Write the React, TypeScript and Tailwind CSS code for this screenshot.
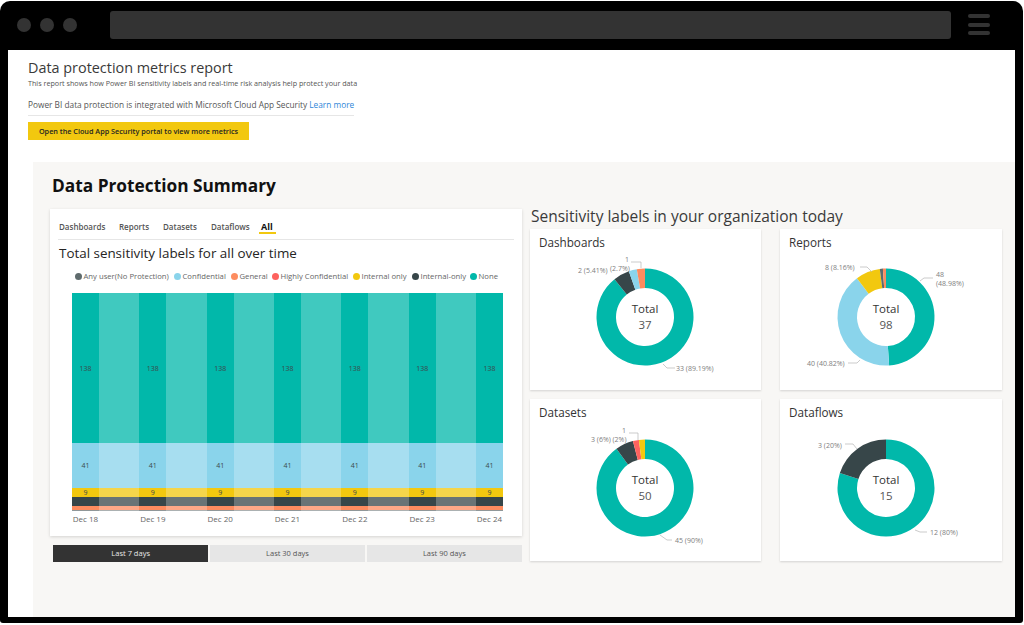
const TEAL = "#01b8aa";
const DARK = "#374649";
const BLUE = "#8ad4eb";
const ORANGE = "#fd8c5f";
const RED = "#fd625e";
const YELLOW = "#f2c80f";

const legend = [
  { name: "Any user(No Protection)", color: "#5f6b6d", w: "w-[99px]" },
  { name: "Confidential", color: BLUE, w: "w-[57px]" },
  { name: "General", color: ORANGE, w: "w-[41px]" },
  { name: "Highly Confidential", color: RED, w: "w-[81px]" },
  { name: "Internal only", color: YELLOW, w: "w-[59px]" },
  { name: "Internal-only", color: DARK, w: "w-[58px]" },
  { name: "None", color: TEAL, w: "w-[30px]" },
];

const days = ["Dec 18", "Dec 19", "Dec 20", "Dec 21", "Dec 22", "Dec 23", "Dec 24"];

function Segments({ labels }: { labels: boolean }) {
  return (
    <div className="flex h-[218px] flex-col text-[7px] leading-none text-[#3b4a4c]">
      <div className="flex h-[150px] items-center justify-center bg-[#01b8aa]">{labels && "138"}</div>
      <div className="flex h-[45px] items-center justify-center bg-[#8ad4eb]">{labels && "41"}</div>
      <div className="flex h-[9px] items-center justify-center bg-[#f2c80f]">{labels && "9"}</div>
      <div className="h-[9px] bg-[#374649]"></div>
      <div className="h-[4px] bg-[#fd8c5f]"></div>
      <div className="h-[1px] bg-[#8f9799]"></div>
    </div>
  );
}

function Chart() {
  return (
    <div className="ml-[22px] mt-[10px] flex w-[431px]">
      {days.map((d, i) => (
        <div key={d} className="contents">
          <div className="w-[27px] shrink-0">
            <Segments labels />
            <div className="mt-[3px] whitespace-nowrap text-center text-[8px] leading-[10px] text-[#666666] [margin-left:-4px] [margin-right:-4px]">
              {d}
            </div>
          </div>
          {i < days.length - 1 && (
            <div className="flex-1 opacity-75">
              <Segments labels={false} />
            </div>
          )}
        </div>
      ))}
    </div>
  );
}

type Slice = { value: number; color: string };
type Note = { x: number; y: number; text: string };
type Donut = {
  title: string;
  total: number;
  cx: number;
  cy: number;
  left: number;
  top: number;
  width: number;
  height: number;
  slices: Slice[];
  notes: Note[];
  lines: string[];
};

function arc(cx: number, cy: number, from: number, to: number) {
  const R = 48.5;
  const r = 29;
  const pt = (rad: number, a: number) =>
    `${(cx + rad * Math.sin(a)).toFixed(2)} ${(cy - rad * Math.cos(a)).toFixed(2)}`;
  const large = to - from > Math.PI ? 1 : 0;
  return `M${pt(R, from)} A${R} ${R} 0 ${large} 1 ${pt(R, to)} L${pt(r, to)} A${r} ${r} 0 ${large} 0 ${pt(r, from)} Z`;
}

function DonutCard({ d }: { d: Donut }) {
  let angle = 0;
  const sum = d.slices.reduce((a, s) => a + s.value, 0);
  return (
    <div className="bg-white shadow-[0_1px_2px_rgba(0,0,0,0.15)]">
      <div className="h-[26px] pl-[9px] pt-[5px] text-[11.7px] leading-[16px] text-[#333333]">{d.title}</div>
      <svg
        width={d.width}
        height={d.height}
        viewBox={`${d.left} ${d.top} ${d.width} ${d.height}`}
        className="block"
        fontFamily="'Open Sans', sans-serif"
      >
        {d.slices.map((s) => {
          const from = angle;
          angle += (s.value / sum) * Math.PI * 2;
          return <path key={s.color} d={arc(d.cx, d.cy, from, angle)} fill={s.color} />;
        })}
        {d.lines.map((l) => (
          <polyline key={l} points={l} fill="none" stroke="#b5b5b5" strokeWidth="0.7" />
        ))}
        {d.notes.map((n) => (
          <text key={n.text + n.y} x={n.x} y={n.y + 2.5} fontSize="7" fill="#808080">
            {n.text}
          </text>
        ))}
        <text x={d.cx} y={d.cy - 4} textAnchor="middle" fontSize="11.5" fill="#333333">
          Total
        </text>
        <text x={d.cx} y={d.cy + 12} textAnchor="middle" fontSize="11.5" fill="#555555">
          {d.total}
        </text>
      </svg>
    </div>
  );
}

const donuts: Donut[] = [
  {
    title: "Dashboards",
    total: 37,
    cx: 645,
    cy: 317,
    left: 530,
    top: 255,
    width: 231,
    height: 135,
    slices: [
      { value: 33, color: TEAL },
      { value: 2, color: DARK },
      { value: 1, color: BLUE },
      { value: 1, color: ORANGE },
    ],
    notes: [
      { x: 625, y: 259, text: "1" },
      { x: 610, y: 268, text: "(2.7%)" },
      { x: 578, y: 270, text: "2 (5.41%)" },
      { x: 676, y: 368, text: "33 (89.19%)" },
    ],
    lines: ["631,262 641,262 641,268", "663,364 667,368 675,368"],
  },
  {
    title: "Reports",
    total: 98,
    cx: 886,
    cy: 317,
    left: 780,
    top: 255,
    width: 222,
    height: 135,
    slices: [
      { value: 48, color: TEAL },
      { value: 40, color: BLUE },
      { value: 8, color: YELLOW },
      { value: 1, color: "#5f6b6d" },
      { value: 1, color: ORANGE },
    ],
    notes: [
      { x: 825, y: 267, text: "8 (8.16%)" },
      { x: 936, y: 274, text: "48" },
      { x: 936, y: 283, text: "(48.98%)" },
      { x: 807, y: 363, text: "40 (40.82%)" },
    ],
    lines: ["860,267 867,267 872,272", "920,281 924,278 933,278", "848,363 857,363 860,360"],
  },
  {
    title: "Datasets",
    total: 50,
    cx: 645,
    cy: 488,
    left: 530,
    top: 425,
    width: 231,
    height: 136,
    slices: [
      { value: 45, color: TEAL },
      { value: 3, color: DARK },
      { value: 1, color: RED },
      { value: 1, color: YELLOW },
    ],
    notes: [
      { x: 622, y: 430, text: "1" },
      { x: 591, y: 439, text: "3 (6%) (2%)" },
      { x: 675, y: 540, text: "45 (90%)" },
    ],
    lines: ["629,433 638,433 638,440", "660,535 667,540 672,540"],
  },
  {
    title: "Dataflows",
    total: 15,
    cx: 886,
    cy: 488,
    left: 780,
    top: 425,
    width: 222,
    height: 136,
    slices: [
      { value: 12, color: TEAL },
      { value: 3, color: DARK },
    ],
    notes: [
      { x: 818, y: 445, text: "3 (20%)" },
      { x: 930, y: 532, text: "12 (80%)" },
    ],
    lines: ["845,444 853,444 857,449", "915,530 920,532 927,532"],
  },
];

export default function App() {
  return (
    <div className="h-[625px] w-[1024px] overflow-hidden bg-white pt-px font-['Open_Sans',sans-serif]">
      <div className="flex h-[622px] w-[1023px] flex-col overflow-hidden rounded-t-[10px] rounded-b-[3px] bg-black">
        <div className="flex h-[49px] shrink-0 items-center pb-[2px] pl-[17px]">
          <div className="h-[14px] w-[14px] rounded-full bg-[#333333]"></div>
          <div className="ml-[9px] h-[14px] w-[14px] rounded-full bg-[#333333]"></div>
          <div className="ml-[9px] h-[14px] w-[14px] rounded-full bg-[#333333]"></div>
          <div className="ml-[33px] h-[28px] w-[841px] rounded-[3px] bg-[#333333]"></div>
          <div className="ml-[17px] flex w-[22px] flex-col gap-[4.5px]">
            <div className="h-[4px] rounded-full bg-[#333333]"></div>
            <div className="h-[4px] rounded-full bg-[#333333]"></div>
            <div className="h-[4px] rounded-full bg-[#333333]"></div>
          </div>
        </div>

        <div className="mx-[8px] flex min-h-0 flex-1 flex-col bg-white">
          <div className="h-[112px] shrink-0 pl-[20px] pt-[8px]">
            <h1 className="text-[14.4px] font-normal leading-[20px] text-[#3a3a3a]">Data protection metrics report</h1>
            <p className="text-[7.2px] leading-[10px] text-[#555555]">
              This report shows how Power BI sensitivity labels and real-time risk analysis help protect your data
            </p>
            <div className="mt-[11px] w-[326px] whitespace-nowrap border-b border-[#e6e6e6] pb-[4px] text-[8.3px] leading-[12px] text-[#555555]">
              Power BI data protection is integrated with Microsoft Cloud App Security{" "}
              <span className="text-[#2f86d8]">Learn more</span>
            </div>
            <div className="mt-[6px] flex h-[18px] w-[221px] items-center justify-center bg-[#f2c80f] pt-px text-[7.25px] font-semibold text-[#252423]">
              Open the Cloud App Security portal to view more metrics
            </div>
          </div>

          <div className="ml-[25px] flex min-h-0 flex-1 flex-col bg-[#f8f7f5] pl-[17px]">
            <h2 className="mt-[13px] h-[22px] pl-[2px] text-[17.3px] font-bold leading-[22px] text-[#111111]">
              Data Protection Summary
            </h2>
            <div className="mt-[12px] flex gap-[8px]">
              <div className="w-[472px]">
                <div className="h-[327px] bg-white shadow-[0_1px_3px_rgba(0,0,0,0.15)]">
                  <div className="mx-[8px] flex h-[31px] items-end border-b border-[#e6e6e6] pb-[6px] text-[8px] font-semibold leading-[12px] text-[#555555]">
                    <span className="ml-px w-[60px]">Dashboards</span>
                    <span className="w-[44px]">Reports</span>
                    <span className="w-[48px]">Datasets</span>
                    <span className="w-[50px]">Dataflows</span>
                    <span className="relative text-[9px] font-bold text-[#111111]">
                      All
                      <span className="absolute bottom-[-1px] left-[-2px] right-[-3px] h-[2px] bg-[#f2c80f]"></span>
                    </span>
                  </div>
                  <div className="ml-[9px] mt-[3px] h-[20px] text-[13.4px] leading-[20px] text-[#252423]">
                    Total sensitivity labels for all over time
                  </div>
                  <div className="ml-[25px] mt-[8px] flex h-[12px] items-center text-[7.7px] text-[#666666]">
                    {legend.map((l) => (
                      <div key={l.name} className={`flex shrink-0 items-center gap-[1.5px] whitespace-nowrap ${l.w}`}>
                        <span className="h-[7px] w-[7px] shrink-0 rounded-full" style={{ backgroundColor: l.color }}></span>
                        <span>{l.name}</span>
                      </div>
                    ))}
                  </div>
                  <Chart />
                </div>
                <div className="ml-[3px] mt-[9px] flex h-[17px] gap-[1.5px] text-[7.5px] text-[#555555]">
                  <div className="flex flex-1 items-center justify-center bg-[#333333] text-[#e8e8e8]">Last 7 days</div>
                  <div className="flex flex-1 items-center justify-center bg-[#e6e6e6]">Last 30 days</div>
                  <div className="flex flex-1 items-center justify-center bg-[#e6e6e6]">Last 90 days</div>
                </div>
              </div>

              <div>
                <div className="h-[20px] whitespace-nowrap pl-px text-[15.5px] leading-[14px] text-[#3a3a3a]">
                  Sensitivity labels in your organization today
                </div>
                <div className="grid grid-cols-[231px_222px] gap-x-[19px] gap-y-[9px]">
                  {donuts.map((d) => (
                    <DonutCard key={d.title} d={d} />
                  ))}
                </div>
              </div>
            </div>
          </div>
        </div>
        <div className="h-[6px] shrink-0"></div>
      </div>
    </div>
  );
}
